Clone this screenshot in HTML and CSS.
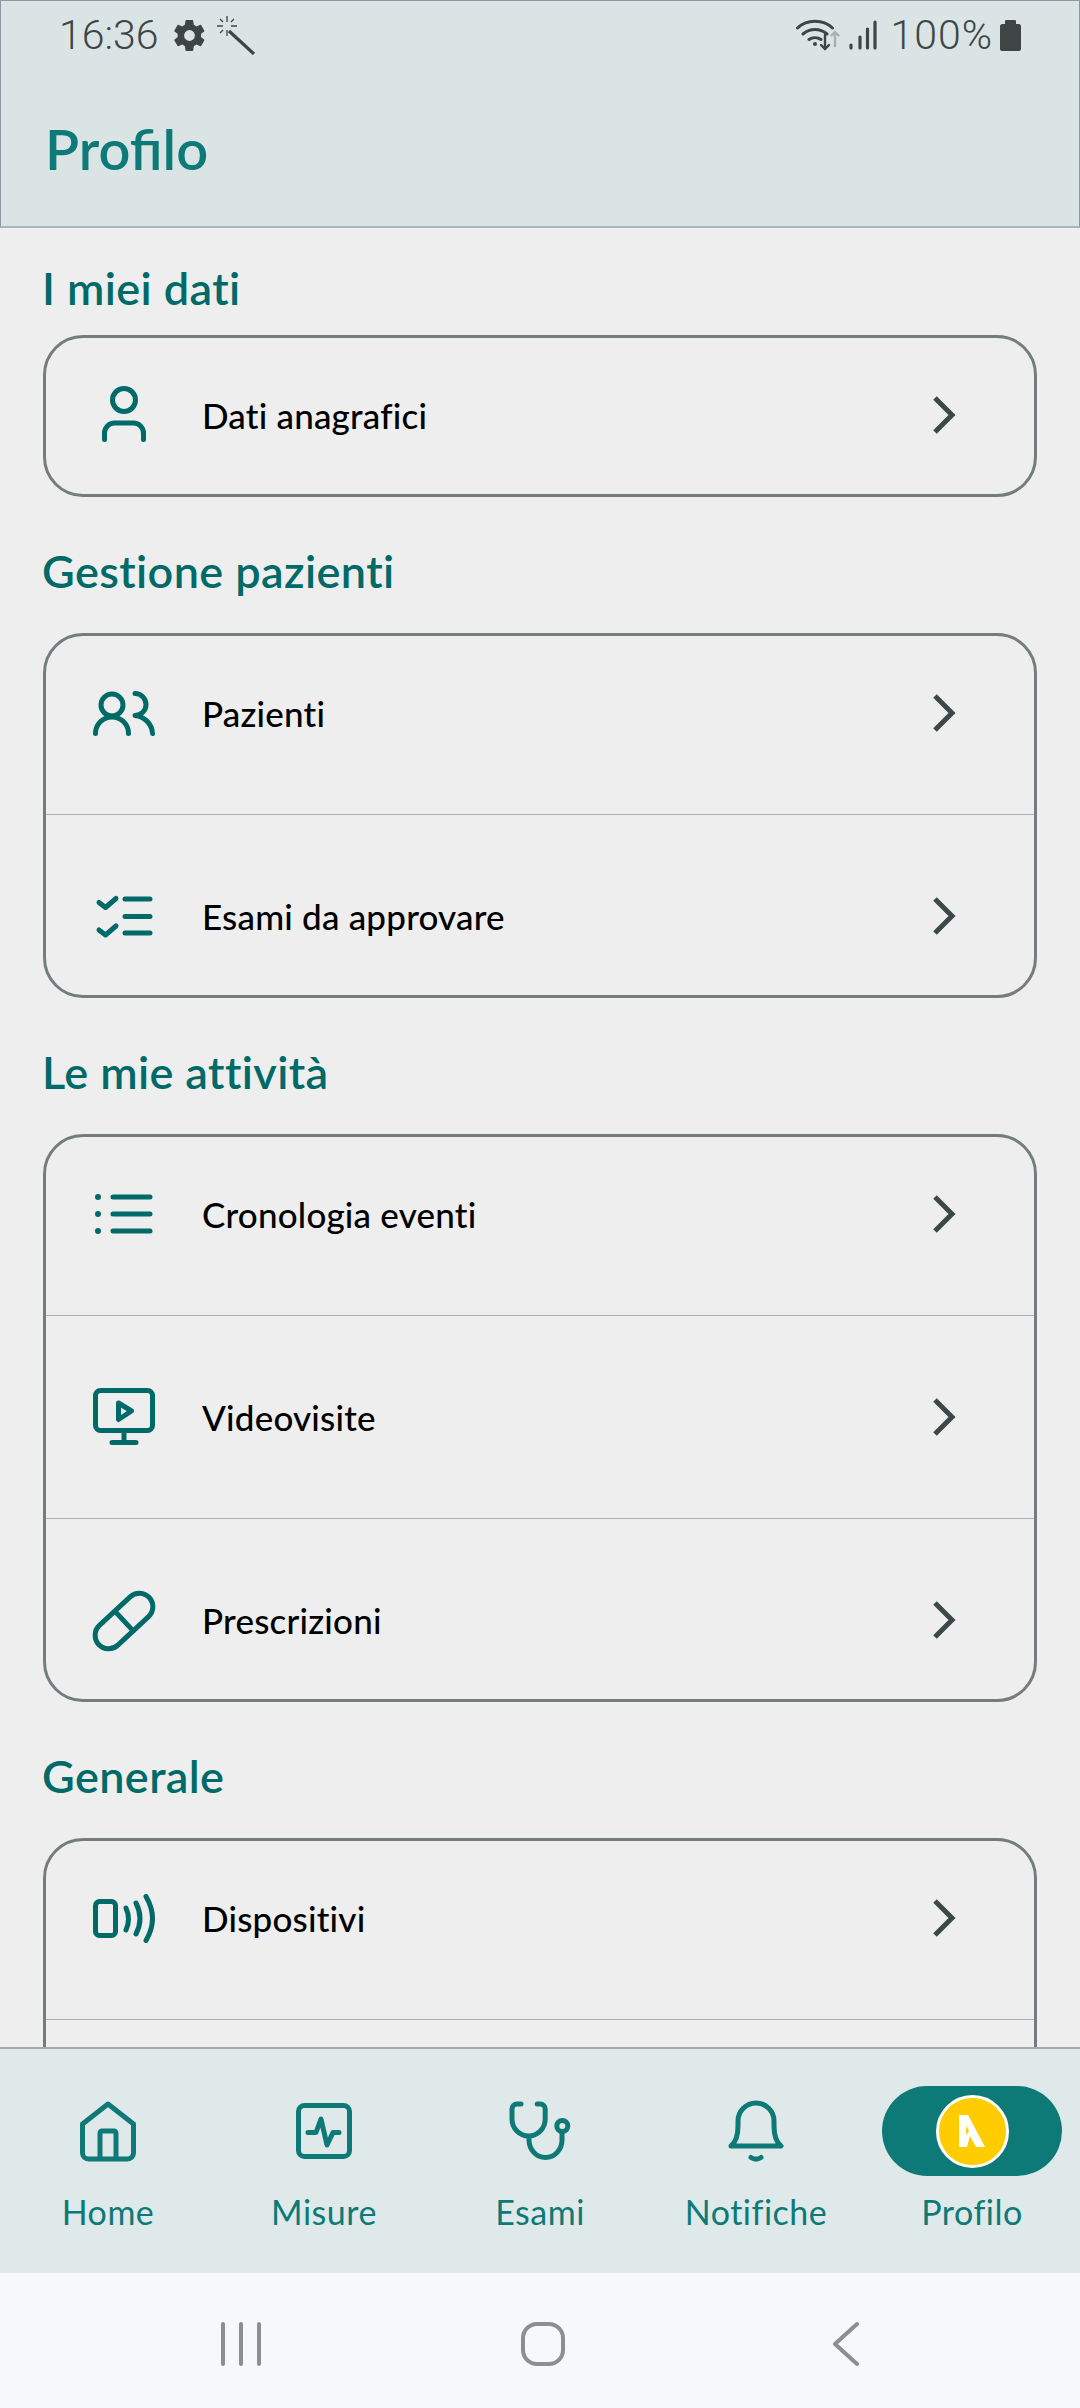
FILE: index.html
```html
<!DOCTYPE html>
<html lang="it">
<head>
    <meta charset="UTF-8">
    <meta name="viewport" content="width=device-width, initial-scale=1.0">
    <title>Profilo</title>
    <link rel="stylesheet" href="styles.css">
</head>
<body>
    <div class="screen">

        <header class="appbar">
            <div class="statusbar">
                <div class="status-left">
                    <span class="clock">16:36</span>
                    <svg class="gear" viewBox="0 0 24 24"><path d="M19.4 13c.1-.3.1-.7.1-1s0-.7-.1-1l2.1-1.6c.2-.2.2-.4.1-.6l-2-3.5c-.1-.2-.4-.3-.6-.2l-2.5 1c-.5-.4-1.100-.7-1.700-1l-.4-2.600c0-.3-.2-.5-.5-.5h-4c-.3 0-.5.2-.5.500l-.4 2.600c-.6.3-1.200.6-1.700 1l-2.500-1c-.2-.1-.5 0-.6.2l-2 3.500c-.1.2-.1.400.1.600l2.100 1.600c-.1.300-.1.700-.1 1s0 .7.1 1l-2.100 1.600c-.2.200-.2.400-.1.600l2 3.500c.1.200.4.300.6.200l2.500-1c.5.400 1.100.7 1.700 1l.4 2.600c0 .3.200.5.500.5h4c.3 0 .5-.2.5-.5l.4-2.600c.6-.3 1.200-.6 1.700-1l2.500 1c.2.100.5 0 .6-.2l2-3.500c.1-.2.100-.4-.1-.6zM12 15.500a3.500 3.500 0 1 1 0-7 3.500 3.500 0 0 1 0 7z"/></svg>
                    <svg class="wand" viewBox="0 0 40 40" fill="none">
                        <path d="M13 16L38 39" stroke-width="3.200"/>
                        <path d="M11 1v6M11 15v6M1 11h6M15 11h6M4 4l3 3M18 4l-3 3M4 18l3-3" stroke-width="1.300"/>
                    </svg>
                </div>
                <div class="status-right">
                    <svg class="wifi" viewBox="0 0 44 34" fill="none">
                        <path d="M1.500 10C11 1 27 1 36.500 10M7 16c7-6 17-6 24 0M13 21.500c3.500-2.500 8.500-2.500 12 0" stroke-width="3"/>
                        <circle class="dot" cx="19" cy="26" r="2"/>
                        <path d="M29 17v14M25 27l4 4 4-4" stroke-width="2.400"/>
                        <path class="faded" d="M39 28V14M35.500 17.500l3.500-3.500 3.500 3.500" stroke-width="2.400"/>
                    </svg>
                    <svg class="signal" viewBox="0 0 28 30" fill="none">
                        <path d="M2 28v-3M11 28V17M18.500 28V9M26 28V2" stroke-width="3.200"/>
                    </svg>
                    <span class="battery-text">100%</span>
                    <svg class="battery" viewBox="0 0 21 31"><path d="M6 0h9a1 1 0 0 1 1 1v3h2.500A2.500 2.500 0 0 1 21 6.500V29a2 2 0 0 1-2 2H2a2 2 0 0 1-2-2V6.500A2.500 2.500 0 0 1 2.500 4H5V1a1 1 0 0 1 1-1z"/></svg>
                </div>
            </div>
            <h1>Profilo</h1>
        </header>

        <main class="content">
            <section class="group">
                <h2>I miei dati</h2>
                <div class="card">
                    <div class="row">
                        <svg class="icon" viewBox="0 0 64 64"><circle cx="32" cy="17" r="11.500"/><path d="M12.500 56.500V50a10 10 0 0 1 10-10h19a10 10 0 0 1 10 10v6.500"/></svg>
                        <span class="row-label">Dati anagrafici</span>
                        <svg class="chevron" viewBox="0 0 24 38"><path d="M3 2l17 17L3 36"/></svg>
                    </div>
                </div>
            </section>

            <section class="group">
                <h2>Gestione pazienti</h2>
                <div class="card">
                    <div class="row">
                        <svg class="icon" viewBox="0 0 64 64"><circle cx="20" cy="24" r="11"/><path d="M3.500 52.500a16.500 16.500 0 0 1 33 0M43 12.500a11 11 0 0 1 0 22c9 1 17 8 17.500 18"/></svg>
                        <span class="row-label">Pazienti</span>
                        <svg class="chevron" viewBox="0 0 24 38"><path d="M3 2l17 17L3 36"/></svg>
                    </div>
                    <div class="row">
                        <svg class="icon" viewBox="0 0 64 64"><path d="M33 15h25M33 32.500h25M33 49h25M7 18.500l6.500 5L24 14.500M7 46l6.500 5L24 42"/></svg>
                        <span class="row-label">Esami da approvare</span>
                        <svg class="chevron" viewBox="0 0 24 38"><path d="M3 2l17 17L3 36"/></svg>
                    </div>
                </div>
            </section>

            <section class="group">
                <h2>Le mie attività</h2>
                <div class="card">
                    <div class="row">
                        <svg class="icon" viewBox="0 0 64 64"><path d="M21 15h37M21 32h37M21 49h37"/><path class="fill-dots" d="M6 12a3 3 0 1 1 0 6 3 3 0 0 1 0-6zM6 29a3 3 0 1 1 0 6 3 3 0 0 1 0-6zM6 46a3 3 0 1 1 0 6 3 3 0 0 1 0-6z"/></svg>
                        <span class="row-label">Cronologia eventi</span>
                        <svg class="chevron" viewBox="0 0 24 38"><path d="M3 2l17 17L3 36"/></svg>
                    </div>
                    <div class="row">
                        <svg class="icon" viewBox="0 0 64 64"><rect x="3.500" y="5.500" width="57" height="40" rx="5"/><path d="M32 46v10M20 57.500h24M26.500 18l13 8-13 8.500z"/></svg>
                        <span class="row-label">Videovisite</span>
                        <svg class="chevron" viewBox="0 0 24 38"><path d="M3 2l17 17L3 36"/></svg>
                    </div>
                    <div class="row">
                        <svg class="icon" viewBox="0 0 64 64"><g transform="rotate(-43 32 33)"><rect x="-2.500" y="19.500" width="69" height="27" rx="13.500"/><path d="M32 19.500v27"/></g></svg>
                        <span class="row-label">Prescrizioni</span>
                        <svg class="chevron" viewBox="0 0 24 38"><path d="M3 2l17 17L3 36"/></svg>
                    </div>
                </div>
            </section>

            <section class="group">
                <h2>Generale</h2>
                <div class="card">
                    <div class="row">
                        <svg class="icon" viewBox="0 0 64 64"><rect x="3.500" y="15.500" width="20" height="34" rx="4"/><path d="M34 22q5 11 0 22M44 17q8 15.500 0 31M54 10.500q13 22 0 44"/></svg>
                        <span class="row-label">Dispositivi</span>
                        <svg class="chevron" viewBox="0 0 24 38"><path d="M3 2l17 17L3 36"/></svg>
                    </div>
                    <div class="row"></div>
                </div>
            </section>
        </main>

        <nav class="tabbar">
            <div class="tab">
                <div class="tab-icon">
                    <svg class="icon" viewBox="0 0 64 64"><path d="M32 5L6.500 25v29a6 6 0 0 0 6 6h39a6 6 0 0 0 6-6V25zM24 60V34a2 2 0 0 1 2-2h12a2 2 0 0 1 2 2v26"/></svg>
                </div>
                <span class="tab-label">Home</span>
            </div>
            <div class="tab">
                <div class="tab-icon">
                    <svg class="icon" viewBox="0 0 64 64"><rect x="6.500" y="6.500" width="51" height="51" rx="6"/><path d="M16 33.500h8L29 20l6 26 6-12.500h6"/></svg>
                </div>
                <span class="tab-label">Misure</span>
            </div>
            <div class="tab">
                <div class="tab-icon">
                    <svg class="icon" viewBox="0 0 64 64"><path d="M13 5H9a5 5 0 0 0-5 5v10a16.600 17 0 0 0 33.200 0V10a5 5 0 0 0-5-5h-3M21 38v3a16.500 17.500 0 0 0 33 0v-8"/><circle cx="54.300" cy="27" r="5.500"/></svg>
                </div>
                <span class="tab-label">Esami</span>
            </div>
            <div class="tab">
                <div class="tab-icon">
                    <svg class="icon" viewBox="0 0 64 64"><path d="M7 47c5-4 7-11 7-20V22a18 18 0 0 1 36 0v5c0 9 2 16 7 20zM27 58.500c3 2 7 2 10 0"/></svg>
                </div>
                <span class="tab-label">Notifiche</span>
            </div>
            <div class="tab active">
                <div class="tab-icon">
                    <div class="avatar">
                        <svg class="avatar-logo" viewBox="0 0 26 32"><path d="M0 0h9l17 32h-9l-6-11-3 11H0zM7 11v9l3-4z" fill-rule="evenodd"/></svg>
                    </div>
                </div>
                <span class="tab-label">Profilo</span>
            </div>
        </nav>

        <footer class="navbar">
            <svg class="nav-recents" viewBox="0 0 44 44"><path d="M4 2v40M22 2v40M40 2v40"/></svg>
            <svg class="nav-home" viewBox="0 0 44 44"><rect x="2" y="2" width="40" height="40" rx="14"/></svg>
            <svg class="nav-back" viewBox="0 0 28 44"><path d="M25 2L3 22l22 20"/></svg>
        </footer>

    </div>
</body>
</html>
```

FILE: styles.css
```css
* {
    box-sizing: border-box;
}

body {
    margin: 0;
    font-family: 'Lato', 'Open Sans', sans-serif;
    background: #eeeeee;
}

.screen {
    display: flex;
    flex-direction: column;
    width: 1080px;
    height: 2408px;
    overflow: hidden;
}

/* Barra superiore */
.appbar {
    flex: none;
    height: 228px;
    background: #dae4e5;
    border: 1px solid #8b98a3;
    border-bottom: 2px solid #a9b5bb;
}

.statusbar {
    display: flex;
    justify-content: space-between;
    align-items: center;
    height: 68px;
    padding: 0 58px;
}

.status-left,
.status-right {
    display: flex;
    align-items: center;
}

.clock,
.battery-text {
    font-family: 'Roboto', sans-serif;
    font-size: 41px;
    font-weight: 300;
    color: #3f4545;
}

.gear {
    width: 37px;
    height: 37px;
    margin-left: 12px;
    fill: #3f4545;
}

.wand {
    width: 40px;
    height: 40px;
    margin-left: 8px;
    stroke: #3f4545;
}

.wifi {
    width: 44px;
    height: 34px;
    stroke: #3f4545;
    stroke-linecap: round;
}

.wifi .dot {
    fill: #3f4545;
    stroke: none;
}

.wifi .faded {
    stroke: #a9b0b0;
}

.signal {
    width: 28px;
    height: 30px;
    margin-left: 9px;
    stroke: #3f4545;
    stroke-linecap: round;
}

.battery-text {
    margin-left: 13px;
    letter-spacing: 1px;
}

.battery {
    width: 21px;
    height: 31px;
    margin-left: 7px;
    fill: #3f4545;
}

h1 {
    margin: 48px 0 0 44px;
    font-size: 56px;
    line-height: 64px;
    font-weight: 600;
    color: #0d7a77;
}

/* Contenuto */
.content {
    flex: 1;
    min-height: 0;
    overflow: hidden;
    padding: 39px 43px 0;
    display: flex;
    flex-direction: column;
    gap: 53px;
}

.group {
    flex: none;
}

h2 {
    margin: 0 0 41px -1px;
    font-size: 45px;
    line-height: 42px;
    font-weight: 600;
    letter-spacing: 0.4px;
    color: #006a68;
}

.group:first-child h2 {
    margin-bottom: 26px;
}

.card {
    border: 3px solid #737d7d;
    border-radius: 40px;
}

.row {
    display: flex;
    align-items: center;
    padding: 69px 78px 69px 46px;
}

.row + .row {
    border-top: 1px solid #a9b0b2;
}

.row:first-child {
    padding-top: 45px;
}

.row:last-child {
    padding-bottom: 47px;
}

.icon {
    flex: none;
    width: 64px;
    height: 64px;
    fill: none;
    stroke: #006a68;
    stroke-width: 5;
    stroke-linecap: round;
    stroke-linejoin: round;
}

.fill-dots {
    fill: #006a68;
    stroke: none;
}

.row-label {
    flex: 1;
    margin-left: 46px;
    font-size: 35px;
    font-weight: 500;
    letter-spacing: 0.2px;
    color: #000000;
}

.chevron {
    flex: none;
    width: 24px;
    height: 38px;
    fill: none;
    stroke: #3c4848;
    stroke-width: 5;
}

/* Barra di navigazione */
.tabbar {
    flex: none;
    display: flex;
    height: 226px;
    padding-top: 37px;
    background: #e0e9ea;
    border-top: 2px solid #a3abad;
}

.tab {
    flex: 1;
    display: flex;
    flex-direction: column;
    align-items: center;
}

.tab .icon {
    stroke: #0d7a77;
}

.tab-icon {
    display: flex;
    justify-content: center;
    align-items: center;
    width: 180px;
    height: 90px;
    border-radius: 45px;
}

.tab.active .tab-icon {
    background: #0d7a77;
}

.tab-label {
    margin-top: 16px;
    font-size: 34px;
    line-height: 40px;
    letter-spacing: 0.5px;
    color: #0d7a77;
}

.avatar {
    display: flex;
    justify-content: center;
    align-items: center;
    width: 73px;
    height: 73px;
    background: #ffcc00;
    border: 3px solid #ffffff;
    border-radius: 50%;
}

.avatar-logo {
    width: 26px;
    height: 32px;
    fill: #ffffff;
}

/* Barra di sistema */
.navbar {
    flex: none;
    display: flex;
    align-items: center;
    height: 135px;
    padding: 7px 0 0 219px;
    background: #f7f8fa;
}

.navbar svg {
    flex: none;
    fill: none;
    stroke: #8e8e8e;
    stroke-linecap: round;
    stroke-linejoin: round;
}

.nav-recents {
    width: 44px;
    height: 44px;
    stroke-width: 4;
}

.nav-home {
    width: 44px;
    height: 44px;
    margin-left: 258px;
    stroke-width: 4;
}

.nav-back {
    width: 28px;
    height: 44px;
    margin-left: 267px;
    stroke-width: 4;
}
```
